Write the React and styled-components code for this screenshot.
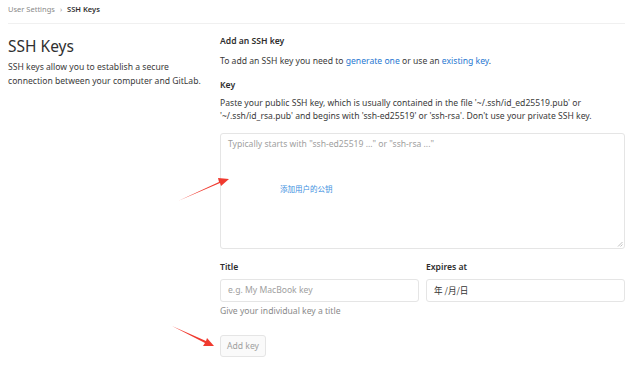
import React from 'react';
import styled, { createGlobalStyle } from 'styled-components';

const GlobalStyle = createGlobalStyle`
  html, body {
    margin: 0;
    padding: 0;
    background: #fff;
  }
  body {
    font-family: "Noto Sans", "Open Sans", "Noto Sans CJK SC", sans-serif;
    color: #2e2e2e;
  }
`;

const Page = styled.div`
  position: relative;
  width: 639px;
  height: 372px;
  padding: 0 14px 0 8px;
  box-sizing: border-box;
  overflow: hidden;
`;

const Breadcrumbs = styled.div`
  display: flex;
  align-items: center;
  gap: 5px;
  height: 24px;
  font-size: 7.5px;
  color: #707070;
  border-bottom: 1px solid #f0f0f0;
  padding-bottom: 5px;
  box-sizing: border-box;
`;

const Crumb = styled.span`
  color: ${p => (p.$current ? '#2e2e2e' : '#8a8a8a')};
  font-weight: ${p => (p.$current ? 600 : 400)};
`;

const Chevron = styled.span`
  font-size: 7px;
  color: #999;
`;

const Layout = styled.div`
  display: grid;
  grid-template-columns: 212px 1fr;
  padding-top: 10px;
`;

const Sidebar = styled.div`
  display: flex;
  flex-direction: column;
  gap: 3px;
  padding-top: 1px;
`;

const Heading = styled.h2`
  margin: 0;
  font-size: 15.5px;
  font-weight: 400;
  color: #303030;
`;

const Lead = styled.p`
  margin: 0;
  font-size: 8.6px;
  line-height: 14px;
  color: #3a3a3a;
`;

const Main = styled.div`
  display: flex;
  flex-direction: column;
`;

const SectionTitle = styled.h4`
  margin: 0 0 7px;
  font-size: 8.6px;
  font-weight: 600;
  line-height: 14px;
`;

const Text = styled.p`
  margin: 0 0 ${p => p.$gap || 0}px;
  font-size: 8.6px;
  line-height: 13.5px;
  color: #3a3a3a;
`;

const Link = styled.a`
  color: #1f78d1;
  text-decoration: none;
`;

const Label = styled.label`
  display: block;
  font-size: 8.6px;
  font-weight: 600;
  line-height: 14px;
  margin-bottom: ${p => p.$gap ?? 5}px;
`;

const TextArea = styled.div`
  position: relative;
  height: 116px;
  border: 1px solid #e5e5e5;
  border-radius: 3px;
  box-sizing: border-box;
  padding: 4px 7px;
  font-size: 8.6px;
  color: #a0a0a0;
`;

const Note = styled.div`
  position: absolute;
  left: 59px;
  top: 49px;
  font-size: 7.5px;
  color: #3c8fe0;
  font-family: "Noto Sans CJK SC", sans-serif;
`;

const Grip = styled.svg`
  position: absolute;
  right: 1px;
  bottom: 1px;
`;

const Row = styled.div`
  display: grid;
  grid-template-columns: 1fr 1fr;
  gap: 7px;
  margin-top: 11px;
`;

const Field = styled.div`
  display: flex;
  flex-direction: column;
`;

const Input = styled.div`
  height: 23px;
  border: 1px solid #e5e5e5;
  border-radius: 3px;
  box-sizing: border-box;
  display: flex;
  align-items: center;
  padding: 0 7px;
  font-size: 8.6px;
  color: ${p => (p.$value ? '#333' : '#a0a0a0')};
  font-family: ${p => (p.$value ? '"Noto Sans CJK SC", sans-serif' : 'inherit')};
`;

const Help = styled.div`
  margin-top: 3px;
  font-size: 8.6px;
  color: #8a8a8a;
`;

const Button = styled.button`
  margin-top: 18px;
  align-self: flex-start;
  width: 46px;
  height: 22px;
  border: 1px solid #e5e5e5;
  border-radius: 3px;
  background: #fafafa;
  color: #a0a0a0;
  font-family: inherit;
  font-size: 8.6px;
  padding: 0;
`;

const Overlay = styled.svg`
  position: absolute;
  left: 0;
  top: 0;
  pointer-events: none;
`;

export default function App() {
  return (
    <Page>
      <GlobalStyle />
      <Breadcrumbs>
        <Crumb>User Settings</Crumb>
        <Chevron>›</Chevron>
        <Crumb $current>SSH Keys</Crumb>
      </Breadcrumbs>
      <Layout>
        <Sidebar>
          <Heading>SSH Keys</Heading>
          <Lead>
            SSH keys allow you to establish a secure
            <br />
            connection between your computer and GitLab.
          </Lead>
        </Sidebar>
        <Main>
          <SectionTitle>Add an SSH key</SectionTitle>
          <Text $gap={9}>
            To add an SSH key you need to <Link>generate one</Link> or use an <Link>existing key</Link>.
          </Text>
          <Label $gap={5}>Key</Label>
          <Text $gap={9}>
            Paste your public SSH key, which is usually contained in the file '~/.ssh/id_ed25519.pub' or
            <br />
            '~/.ssh/id_rsa.pub' and begins with 'ssh-ed25519' or 'ssh-rsa'. Don't use your private SSH key.
          </Text>
          <TextArea>
            Typically starts with "ssh-ed25519 ..." or "ssh-rsa ..."
            <Note>添加用户的公钥</Note>
            <Grip width="6" height="6" viewBox="0 0 6 6">
              <path d="M5.5 1 L1 5.5 M5.5 3.5 L3.5 5.5" stroke="#b0b0b0" strokeWidth="0.8" />
            </Grip>
          </TextArea>
          <Row>
            <Field>
              <Label $gap={5}>Title</Label>
              <Input>e.g. My MacBook key</Input>
              <Help>Give your individual key a title</Help>
            </Field>
            <Field>
              <Label $gap={5}>Expires at</Label>
              <Input $value>年 /月/日</Input>
            </Field>
          </Row>
          <Button>Add key</Button>
        </Main>
      </Layout>
      <Overlay width="639" height="372" viewBox="0 0 639 372">
        <polygon points="178,201 219,182 218,178 229,179 221,186 220,183" fill="#f03a2f" />
        <polygon points="172,326 206,341 207,338 214,346 203,346 205,343" fill="#f03a2f" />
      </Overlay>
    </Page>
  );
}
